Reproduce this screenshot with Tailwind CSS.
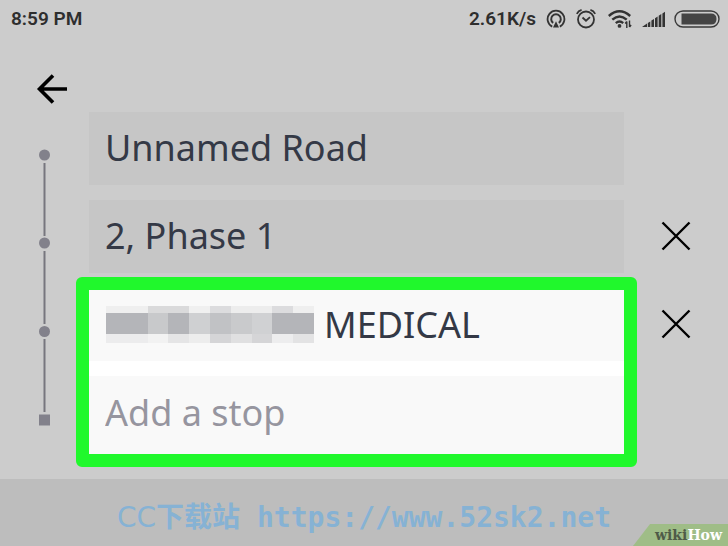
<!DOCTYPE html>
<html lang="en">
<head>
    <meta charset="UTF-8">
    <meta name="viewport" content="width=device-width, initial-scale=1.0">
    <title>Add a stop</title>
    <script src="https://cdn.jsdelivr.net/npm/@tailwindcss/browser@4"></script>
</head>
<body class="bg-[#cccccc] min-h-screen flex flex-col font-['Noto_Sans',sans-serif] text-[#343946]">

<!-- Status bar -->
<header class="flex items-center justify-between h-[38px] pl-[11px] pr-2 font-['Roboto',sans-serif] text-[19px] font-semibold text-[#2e2e2e]">
    <span>8:59 PM</span>
    <div class="flex items-center">
        <span class="mr-[10px]">2.61K/s</span>
        <svg class="w-5 h-5 mr-[10px]" viewBox="0 0 20 20" fill="none" stroke="#333" stroke-width="1.8">
            <path d="M6.2 17.6a8.4 8.4 0 1 1 7.6 0"/>
            <path d="M7.2 13.9a4.8 4.8 0 1 1 5.6 0" stroke-width="2"/>
            <path d="M10 12.2l3 6.3H7z" fill="#333" stroke="none"/>
        </svg>
        <svg class="w-5 h-5 mr-3" viewBox="0 0 20 20" fill="none" stroke="#333" stroke-width="1.8">
            <circle cx="10" cy="10.500" r="8"/>
            <path d="M6.500 8.500l3.500 3.200 4-3.600M.8 4.800Q2.400 1.700 5.600 .9M19.200 4.800Q17.600 1.700 14.400 .9"/>
        </svg>
        <svg class="w-6 h-5 mr-[10px]" viewBox="0 0 24 20" fill="none" stroke="#333" stroke-width="2.4">
            <path d="M.8 7q10.700-9.500 21.400 0M4.300 10.600q7.200-6.400 14.400 0M7.800 14.200q3.700-3.300 7.400 0"/>
            <circle cx="11.500" cy="16.900" r="1.900" fill="#333" stroke="none"/>
            <path d="M18.800 12.500v6.500M17.200 14.500l1.600-2M21.500 11.500v6.500M23.100 16l-1.600 2" stroke-width="1.400"/>
        </svg>
        <svg class="w-6 h-5 mr-2" viewBox="0 0 24 20" fill="#333">
            <path d="M0 18l5-3.400V18zM5.800 14L8.300 12.400V18H5.800zM9.400 11.600L12 9.900V18H9.400zM13 9.200l2.600-1.700V18H13zM16.700 6.800L19.300 5.100V18h-2.600zM20.400 4.400L23 2.700V18h-2.600z"/>
        </svg>
        <svg class="w-[46px] h-5" viewBox="0 0 46 20">
            <rect x="1" y="2" width="44" height="16" rx="8" fill="none" stroke="#3a3a3a" stroke-width="1.400"/>
            <path d="M7.500 4.500H37q5.500 0 5.500 5.500t-5.500 5.500H7.500z" fill="#444"/>
        </svg>
    </div>
</header>

<main>
    <div class="h-[74px] pl-9 pt-9">
        <button type="button" aria-label="Back" class="block">
            <svg class="w-8 h-8" viewBox="0 0 32 32" fill="none" stroke="#000" stroke-width="3.600">
                <path d="M31 15H4M17 1.500L3.500 15L17 28.500"/>
            </svg>
        </button>
    </div>

    <form class="flex">
        <!-- Route line -->
        <svg class="w-[89px] h-[320px] shrink-0" viewBox="0 0 89 320" fill="#82818b">
            <path d="M44.500 51V124M44.500 139V212M44.500 227V300" stroke="#77767e" stroke-width="2"/>
            <circle cx="44.500" cy="43" r="5.500"/>
            <circle cx="44.500" cy="131" r="5.500"/>
            <circle cx="44.500" cy="219.500" r="5.500"/>
            <rect x="39" y="302.500" width="11" height="11"/>
        </svg>

        <!-- Stops -->
        <div class="flex-1 min-w-0">
            <input type="text" aria-label="Pickup" value="Unnamed Road" class="block w-full h-[73px] mb-[15px] px-4 pb-[2px] bg-[#c6c6c6] text-4xl">
            <input type="text" aria-label="Stop 1" value="2, Phase 1" class="block w-full h-[73px] mb-1 px-4 pb-[2px] bg-[#c6c6c6] text-4xl">
            <div class="-mx-[13px] border-[13px] border-[#20f82c] rounded-md bg-white">
                <div class="flex items-center h-[71px] pl-[17px] pb-[2px] bg-[#f9f9f9]">
                    <svg class="w-[208px] h-[37px] shrink-0" viewBox="0 0 200 37" preserveAspectRatio="none" shape-rendering="crispEdges">
                        <path d="M0 0h40v7H0z" fill="#efefef"/>
                        <path d="M40 0h40v7H40z" fill="#dadadb"/>
                        <path d="M80 0h20v7H80z" fill="#f0f0f0"/>
                        <path d="M100 0h20v7h-20z" fill="#dcdcde"/>
                        <path d="M120 0h40v7h-40z" fill="#ededed"/>
                        <path d="M160 0h20v7h-20z" fill="#dcdcde"/>
                        <path d="M180 0h20v7h-20z" fill="#efefef"/>
                        <path d="M0 7h40v21H0z" fill="#b4b5b9"/>
                        <path d="M40 7h20v21H40z" fill="#c8c9cb"/>
                        <path d="M60 7h20v21H60z" fill="#b4b5b9"/>
                        <path d="M80 7h20v21H80z" fill="#cfd0d2"/>
                        <path d="M100 7h20v21h-20z" fill="#c1c2c5"/>
                        <path d="M120 7h20v21h-20z" fill="#c9cacc"/>
                        <path d="M140 7h20v21h-20z" fill="#d0d1d3"/>
                        <path d="M160 7h40v21h-40z" fill="#b4b5b9"/>
                        <path d="M0 28h40v9H0z" fill="#ececed"/>
                        <path d="M40 28h20v9H40z" fill="#f2f2f2"/>
                        <path d="M60 28h20v9H60z" fill="#e5e5e6"/>
                        <path d="M80 28h20v9H80z" fill="#ededed"/>
                        <path d="M100 28h20v9h-20z" fill="#d5d5d7"/>
                        <path d="M120 28h20v9h-20z" fill="#e0e0e1"/>
                        <path d="M140 28h20v9h-20z" fill="#d5d5d7"/>
                        <path d="M160 28h20v9h-20z" fill="#ededee"/>
                        <path d="M180 28h20v9h-20z" fill="#e3e3e4"/>
                    </svg>
                    <input type="text" aria-label="Stop 2" value="MEDICAL" class="flex-1 min-w-0 h-full pl-[10px] text-4xl">
                </div>
                <input type="text" aria-label="New stop" placeholder="Add a stop" class="block w-full h-[78px] mt-[15px] px-4 pb-[6px] bg-[#f9f9f9] text-4xl placeholder:text-[#96959f]">
            </div>
        </div>

        <!-- Remove buttons -->
        <div class="w-[104px] shrink-0 flex flex-col items-center pt-[87px] gap-[15px]">
            <button type="button" aria-label="Remove stop 1" class="h-[73px]">
                <svg class="w-8 h-8" viewBox="0 0 32 32" stroke="#000" stroke-width="2.400">
                    <path d="M2.500 2.500l27 27M29.500 2.500l-27 27"/>
                </svg>
            </button>
            <button type="button" aria-label="Remove stop 2" class="h-[73px]">
                <svg class="w-8 h-8" viewBox="0 0 32 32" stroke="#000" stroke-width="2.400">
                    <path d="M2.500 2.500l27 27M29.500 2.500l-27 27"/>
                </svg>
            </button>
        </div>
    </form>
</main>

<footer class="relative flex-1 mt-3 pt-4 bg-[#bdbdbd] text-center">
    <p class="font-['DejaVu_Sans_Mono',monospace] text-[28px] leading-10 font-bold text-[#86b2d4]"><span class="font-['DejaVu_Sans','Noto_Sans_CJK_SC',sans-serif] font-normal">CC</span><span class="font-['Noto_Sans_CJK_SC',sans-serif]">下载站</span> https://www.52sk2.net</p>
    <div class="absolute right-0 bottom-0 w-[95px] h-[22px] pr-[6px] bg-[#9fbd87] [clip-path:polygon(17px_0,100%_0,100%_100%,0_100%)] text-right font-['DejaVu_Serif',serif] text-sm leading-[22px] font-bold text-[#4f5b48]">wiki<span class="text-white">How</span></div>
</footer>

</body>
</html>
